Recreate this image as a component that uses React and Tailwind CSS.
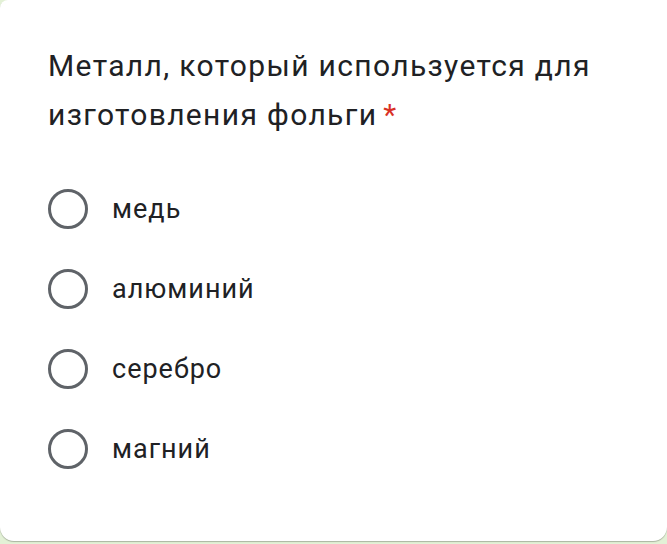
const options = ['медь', 'алюминий', 'серебро', 'магний'];

const Radio = () => (
  <div className="w-10 h-10 rounded-full border-[3.5px] border-[#5f6368] shrink-0" />
);

export default function App() {
  return (
    <div className="w-[667px] h-[544px] bg-[#e3f1d6] flex flex-col" style={{ fontFamily: 'Roboto, "Noto Sans", sans-serif' }}>
      <div className="h-[541px] bg-white rounded-b-[14px] rounded-tl-[8px] shadow-[0_1px_1px_rgba(0,0,0,0.25)] pl-12 pr-6 pt-[41px]">
        <h1 className="text-[30px] leading-[49px] text-[#202124] font-normal tracking-[1.35px]">
          Металл, который используется для изготовления фольги
          <span className="text-[#d93025] ml-[6px]">*</span>
        </h1>
        <div className="mt-[50px] flex flex-col gap-10">
          {options.map((o) => (
            <div key={o} className="flex items-center gap-6 h-10">
              <Radio />
              <span className="text-[27px] text-[#202124] tracking-[1px]">{o}</span>
            </div>
          ))}
        </div>
      </div>
    </div>
  );
}
